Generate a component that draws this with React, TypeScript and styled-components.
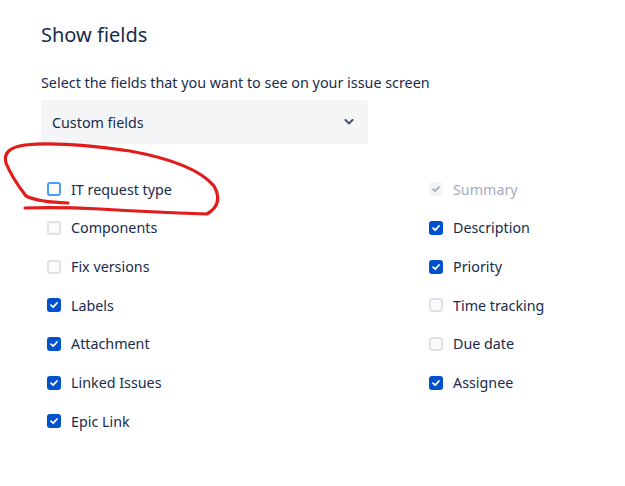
import styled, { createGlobalStyle } from 'styled-components';

const GlobalStyle = createGlobalStyle`
    html, body {
        margin: 0;
        padding: 0;
        background: #fff;
    }
    body {
        font-family: "Noto Sans", "Liberation Sans", sans-serif;
        color: #172b4d;
    }
`;

const Page = styled.div`
    position: relative;
    width: 625px;
    height: 486px;
    padding: 22px 0 0 41px;
    box-sizing: border-box;
    overflow: hidden;
`;

const Title = styled.h1`
    margin: 0;
    font-size: 20px;
    line-height: 26px;
    font-weight: 400;
    color: #172b4d;
`;

const Subtitle = styled.p`
    margin: 25px 0 0;
    font-size: 14.35px;
    line-height: 20px;
    color: #172b4d;
`;

const Select = styled.div`
    margin-top: 7px;
    width: 327px;
    height: 44px;
    box-sizing: border-box;
    padding: 0 14px 0 11px;
    display: flex;
    align-items: center;
    justify-content: space-between;
    background: #f4f5f7;
    border-radius: 3px;
    font-size: 14.3px;
    color: #172b4d;
`;

const FieldGrid = styled.div`
    margin-top: 26px;
    display: grid;
    grid-template-columns: 382px 1fr;
    grid-auto-flow: column;
    grid-template-rows: repeat(7, 38.67px);
    padding-left: 6px;
`;

const Field = styled.label<{ $disabled?: boolean }>`
    display: flex;
    align-items: center;
    gap: 10px;
    font-size: 14.3px;
    color: ${p => (p.$disabled ? '#a5adba' : '#172b4d')};
`;

const Box = styled.span<{ $checked: boolean; $disabled?: boolean; $focused?: boolean }>`
    width: 14px;
    height: 14px;
    box-sizing: border-box;
    border-radius: 3px;
    display: flex;
    align-items: center;
    justify-content: center;
    border: 2px solid
        ${p =>
            p.$focused
                ? '#4c9aff'
                : p.$disabled
                ? '#f4f5f7'
                : p.$checked
                ? '#0052cc'
                : '#dfe1e6'};
    background: ${p => (p.$disabled ? '#f4f5f7' : p.$checked ? '#0052cc' : '#fafbfc')};
`;

const Annotation = styled.svg`
    position: absolute;
    left: 0;
    top: 0;
    pointer-events: none;
`;

interface FieldItem {
    label: string;
    checked: boolean;
    disabled?: boolean;
    focused?: boolean;
}

const fields: FieldItem[] = [
    { label: 'IT request type', checked: false, focused: true },
    { label: 'Components', checked: false },
    { label: 'Fix versions', checked: false },
    { label: 'Labels', checked: true },
    { label: 'Attachment', checked: true },
    { label: 'Linked Issues', checked: true },
    { label: 'Epic Link', checked: true },
    { label: 'Summary', checked: true, disabled: true },
    { label: 'Description', checked: true },
    { label: 'Priority', checked: true },
    { label: 'Time tracking', checked: false },
    { label: 'Due date', checked: false },
    { label: 'Assignee', checked: true },
];

function Check({ color }: { color: string }) {
    return (
        <svg width="10" height="10" viewBox="0 0 10 10">
            <path
                d="M2 5.2 L4.2 7.2 L8 3"
                fill="none"
                stroke={color}
                strokeWidth="1.8"
                strokeLinecap="round"
                strokeLinejoin="round"
            />
        </svg>
    );
}

export default function App() {
    return (
        <>
            <GlobalStyle />
            <Page>
                <Title>Show fields</Title>
                <Subtitle>Select the fields that you want to see on your issue screen</Subtitle>
                <Select>
                    <span>Custom fields</span>
                    <svg width="10" height="6" viewBox="0 0 10 6">
                        <path
                            d="M1.5 1 L5 4.5 L8.5 1"
                            fill="none"
                            stroke="#42526e"
                            strokeWidth="2"
                            strokeLinecap="round"
                            strokeLinejoin="round"
                        />
                    </svg>
                </Select>
                <FieldGrid>
                    {fields.map(f => (
                        <Field key={f.label} $disabled={f.disabled}>
                            <Box $checked={f.checked} $disabled={f.disabled} $focused={f.focused}>
                                {f.checked && <Check color={f.disabled ? '#a5adba' : '#fff'} />}
                            </Box>
                            {f.label}
                        </Field>
                    ))}
                </FieldGrid>
                <Annotation width="625" height="486" viewBox="0 0 625 486">
                    <path
                        d="M68 203 Q38 202 26 196 Q12 178 6 163 Q2 148 25 145 Q60 141 130 151 Q195 163 214 186 Q224 204 207 214 Q150 212 100 209 Q60 207 25 208"
                        fill="none"
                        stroke="#e21b1b"
                        strokeWidth="3.2"
                        strokeLinecap="round"
                        strokeLinejoin="round"
                    />
                </Annotation>
            </Page>
        </>
    );
}
